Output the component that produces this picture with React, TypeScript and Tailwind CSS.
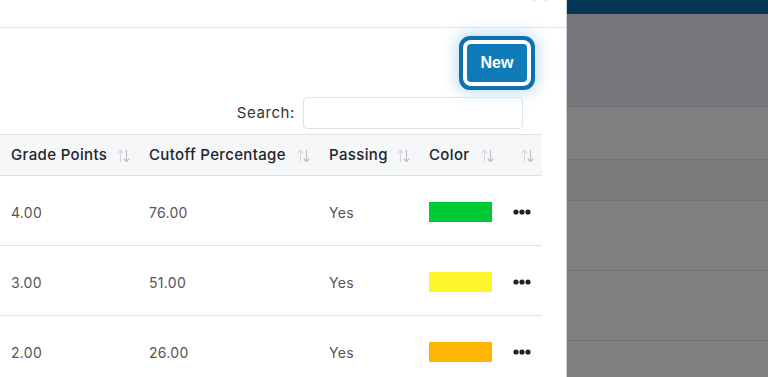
import React from "react";

const SortIcon = () => (
  <svg width="13" height="14" viewBox="0 0 13 14" className="shrink-0">
    <g fill="none" strokeWidth="1.1" strokeLinecap="round" strokeLinejoin="round">
      <path d="M3.5 13 V1.5 M1 4 L3.5 1.5 L6 4" stroke="#d3d7db" />
      <path d="M9.5 1 V12.5 M7 10 L9.5 12.5 L12 10" stroke="#babfc4" />
    </g>
  </svg>
);

const Dots = () => (
  <svg width="18" height="6" viewBox="0 0 18 6">
    <circle cx="3" cy="3" r="2.6" fill="#222" />
    <circle cx="9" cy="3" r="2.6" fill="#222" />
    <circle cx="15" cy="3" r="2.6" fill="#222" />
  </svg>
);

const rows = [
  { gp: "4.00", cut: "76.00", pass: "Yes", color: "#00c936" },
  { gp: "3.00", cut: "51.00", pass: "Yes", color: "#fff52b" },
  { gp: "2.00", cut: "26.00", pass: "Yes", color: "#ffb400" },
];

const cols = [
  { label: "Grade Points", w: "w-[138px]" },
  { label: "Cutoff Percentage", w: "w-[180px]" },
  { label: "Passing", w: "w-[100px]" },
  { label: "Color", w: "w-[84px]" },
  { label: "", w: "w-[40px]" },
];

export default function App() {
  return (
    <div
      className="flex w-[768px] h-[377px] overflow-hidden bg-white"
      style={{ fontFamily: "Inter, 'Noto Sans', sans-serif" }}
    >
      {/* Modal */}
      <div className="w-[567px] h-full bg-white border-r border-[#c9ced3] flex flex-col shrink-0">
        <div className="h-[28px] border-b border-[#dde2e6] relative shrink-0">
          <svg width="16" height="16" viewBox="0 0 16 16" className="absolute left-[532px] top-[-14px]">
            <path d="M2 2 L14 14 M14 2 L2 14" stroke="#b0b5ba" strokeWidth="1.5" strokeLinecap="round" />
          </svg>
        </div>
        <div className="flex justify-end pr-[39px] pt-[16px] shrink-0">
          <button
            className="w-[60px] h-[38px] rounded-[4px] bg-[#0f7bb9] text-white font-bold text-[16px] shadow-[0_0_0_4px_#fff,0_0_0_8px_#0f70b0,0_0_16px_10px_rgba(30,135,205,0.3)]"
            style={{ fontFamily: "'Liberation Sans', Arial, sans-serif" }}
          >
            New
          </button>
        </div>
        <div className="flex justify-end items-center pr-[43px] pt-[15px] gap-[8px] shrink-0">
          <span className="text-[15px] tracking-[0.6px] text-[#333]">Search:</span>
          <div className="w-[220px] h-[32px] border border-[#dde2e6] rounded-[4px]" />
        </div>
        <div className="mt-[5px] w-[542px]">
          <div className="flex h-[42px] bg-[#f5f7f9] border-t border-b border-[#dde2e6] items-center">
            {cols.map((c, i) => (
              <div key={i} className={`${c.w} flex items-center justify-between pl-[11px] pr-[8px] h-full pt-[1px]`}>
                <span className="text-[15px] tracking-[0.35px] font-medium text-[#212529] whitespace-nowrap">{c.label}</span>
                <SortIcon />
              </div>
            ))}
          </div>
          {rows.map((r, i) => (
            <div key={i} className="flex h-[70px] pt-[2px] border-b border-[#dde2e6] items-center text-[14px] tracking-[0.3px] text-[#555]">
              <div className="w-[138px] pl-[11px] pt-[1px]">{r.gp}</div>
              <div className="w-[180px] pl-[11px] pt-[1px]">{r.cut}</div>
              <div className="w-[100px] pl-[11px] pt-[1px]">{r.pass}</div>
              <div className="w-[84px] pl-[11px]">
                <div className="w-[63px] h-[20px]" style={{ backgroundColor: r.color }} />
              </div>
              <div className="w-[40px] flex justify-center">
                <Dots />
              </div>
            </div>
          ))}
        </div>
      </div>
      {/* Backdrop */}
      <div className="flex-1 h-full flex flex-col">
        <div className="h-[14px] bg-[#053556]" />
        <div className="h-[93px] bg-[#76777b] border-b border-[#6f7072]" />
        <div className="h-[53px] bg-[#7f7f7f] border-b border-[#6f7072]" />
        <div className="h-[41px] bg-[#7a7b7d] border-b border-[#6f7072]" />
        <div className="h-[70px] bg-[#7f7f7f] border-b border-[#6f7072]" />
        <div className="h-[70px] bg-[#7f7f7f] border-b border-[#6f7072]" />
        <div className="flex-1 bg-[#7f7f7f]" />
      </div>
    </div>
  );
}
